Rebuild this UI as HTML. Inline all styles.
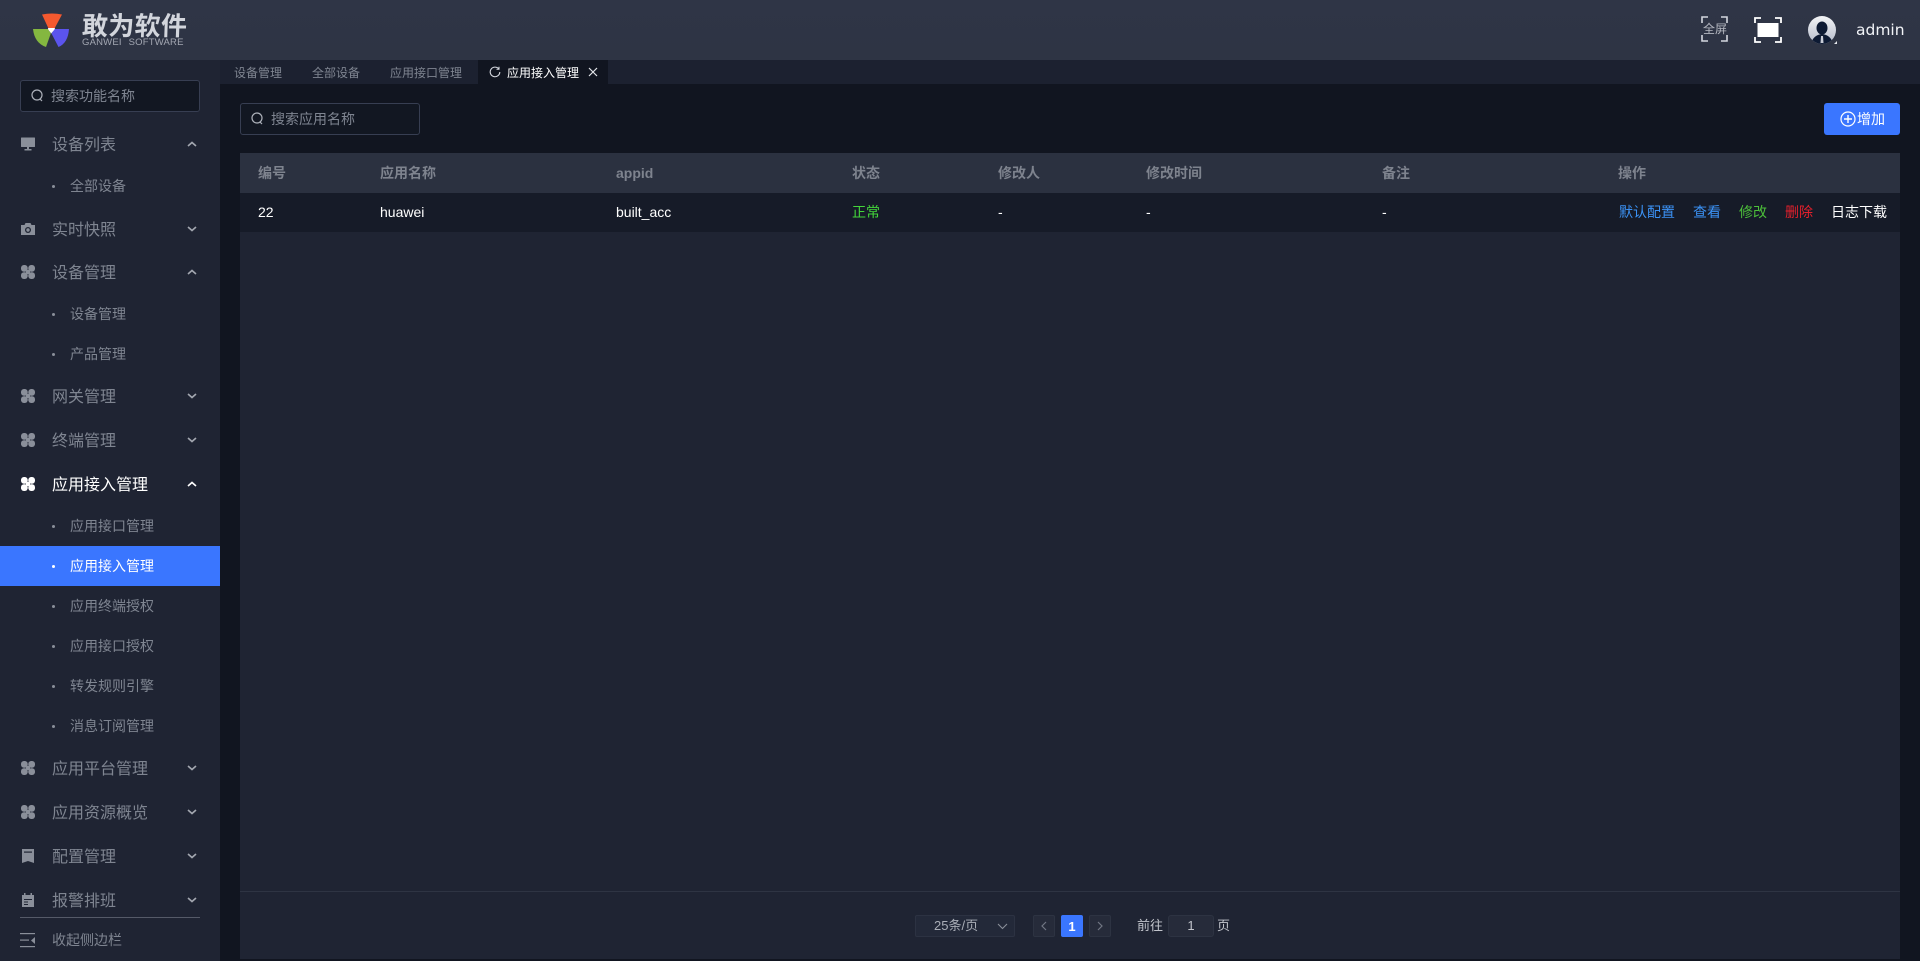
<!DOCTYPE html>
<html lang="zh-CN"><head><meta charset="utf-8"><title>敢为软件</title>
<style>
*{box-sizing:border-box}
html,body{margin:0;padding:0;width:1920px;height:961px;overflow:hidden;background:#111520;font-family:"Liberation Sans","Noto Sans CJK SC",sans-serif}
.a{position:absolute;white-space:nowrap;line-height:20px;height:20px}
.m{left:52px;font-size:16px;color:#7f8591;margin-top:2px}
.s{left:70px;font-size:14px;color:#7f8591}
.d{position:absolute;left:52px;width:3px;height:3px;border-radius:50%;background:#8a8f9a}
.t{font-size:12px;color:#7f8591;top:63px}
.h{font-size:14px;font-weight:bold;color:#7e838e;top:163px}
.c{font-size:14px;color:#fff;top:202px}
svg{position:absolute;display:block}
.ic{left:21px;width:14px;height:14px}
.ar{left:186px;width:12px;height:8px}
</style></head><body>
<svg width="0" height="0" style="position:absolute"><defs>
<g id="clover" fill="currentColor"><rect x="0" y="0" width="6.700" height="6.700" rx="2.900"/><rect x="7.300" y="0" width="6.700" height="6.700" rx="2.900"/><rect x="0" y="7.300" width="6.700" height="6.700" rx="2.900"/><rect x="7.300" y="7.300" width="6.700" height="6.700" rx="2.900"/><rect x="5" y="5" width="4" height="4"/></g>
<path id="up" d="M2 6 L6 2.500 L10 6" fill="none" stroke="currentColor" stroke-width="1.600"/>
<path id="down" d="M2 2 L6 5.500 L10 2" fill="none" stroke="currentColor" stroke-width="1.600"/>
</defs></svg>

<!-- header -->
<div style="position:absolute;left:0;top:0;width:1920px;height:60px;background:linear-gradient(#2f3546,#2e3444)"></div>
<svg style="left:33px;top:13px" width="36" height="35" viewBox="0 0 36 35">
<path d="M9 1.500 Q19 -.5 29 1.500 L21.500 15.500 L15.500 15.500Z" fill="#f4592f"/>
<path d="M0 16 L15 16 L17.800 20.500 L13 34 Q1.500 30 0 16Z" fill="#84b740"/>
<path d="M21.500 16 L36 16 Q35 30 25.500 34 L18.500 20.500Z" fill="#5b54ee"/>
<path d="M15 15 L22 15 L21.500 16.500 L18.200 20.500 L15.200 16.500Z" fill="#fff"/>
</svg>
<div class="a" style="left:82px;top:13px;font-size:26px;line-height:26px;height:26px;font-weight:bold;color:#d2d5dc;letter-spacing:.3px;transform:skewX(-2deg)">敢为软件</div>
<div class="a" style="left:82px;top:37px;font-size:9.500px;line-height:12px;height:12px;color:#a3a7b2;letter-spacing:.2px;word-spacing:4px">GANWEI SOFTWARE</div>

<svg style="left:1701px;top:16px" width="27" height="26" fill="none" stroke="#d3d6de" stroke-width="1.600"><path d="M1 7V1H7M20 1H26V7M1 19V25H7M20 25H26V19"/></svg>
<div class="a" style="left:1703px;top:19px;font-size:12px;color:#b4b7c0">全屏</div>
<svg style="left:1754px;top:17px" width="28" height="26" fill="none"><path d="M1 6V1H7M21 1H27V6M1 20V25H7M21 25H27V20" stroke="#fff" stroke-width="1.800"/><rect x="3.500" y="6" width="21" height="14" fill="#fff"/></svg>
<svg style="left:1808px;top:16px" width="30" height="29" viewBox="0 0 30 29"><defs><linearGradient id="av" x1="0" y1="0" x2="0" y2="1"><stop offset="0" stop-color="#f3f4f6"/><stop offset="1" stop-color="#b4bbcb"/></linearGradient><clipPath id="cp"><circle cx="14" cy="14" r="14"/></clipPath></defs><circle cx="14" cy="14" r="14" fill="url(#av)"/><g clip-path="url(#cp)"><ellipse cx="14" cy="12" rx="5.500" ry="6.500" fill="#0d1a33"/><path d="M3 28 Q5 19 14 18 Q23 19 25 28Z" fill="#0d1a33"/><path d="M13 20h2l.5 7h-3z" fill="#c8ccd6"/></g><path d="M26 28h3v-3z" fill="#e5e7ec"/></svg>
<div class="a" style="left:1856px;top:20px;font-family:'DejaVu Sans',sans-serif;font-size:15.500px;color:#f2f4f8">admin</div>

<!-- sidebar -->
<div style="position:absolute;left:0;top:60px;width:220px;height:901px;background:#1f2433"></div>
<div style="position:absolute;left:20px;top:80px;width:180px;height:32px;background:#121722;border:1px solid #373e52;border-radius:3px"></div>
<svg style="left:31px;top:89px" width="13" height="14" fill="none" stroke="#aeb2bb" stroke-width="1.200"><circle cx="6" cy="6" r="5"/><path d="M9 10l2 2"/></svg>
<div class="a" style="left:51px;top:86px;font-size:14px;color:#7f8591">搜索功能名称</div>

<svg class="ic" style="top:137px;color:#8a8f9a" viewBox="0 0 14 14" fill="#8a8f9a"><rect x="0" y="0.500" width="14" height="9.500" rx=".5"/><rect x="6" y="10" width="2" height="2"/><rect x="3.500" y="12" width="7" height="1.500"/></svg>
<div class="a m" style="top:134px">设备列表</div>
<svg class="ar" style="top:140px;color:#a3a7b0" viewBox="0 0 12 8"><use href="#up"/></svg>
<div class="d" style="top:185px"></div><div class="a s" style="top:176px">全部设备</div>

<svg class="ic" style="top:222px" viewBox="0 0 14 14"><path d="M0 3h3.500l1-2h5l1 2H14v10H0z" fill="#8a8f9a"/><circle cx="7" cy="8" r="3" fill="#1f2433"/><circle cx="7" cy="8" r="1.700" fill="#8a8f9a"/></svg>
<div class="a m" style="top:219px">实时快照</div>
<svg class="ar" style="top:225px;color:#a3a7b0" viewBox="0 0 12 8"><use href="#down"/></svg>

<svg class="ic" style="top:265px;color:#8a8f9a" viewBox="0 0 14 14"><use href="#clover"/></svg>
<div class="a m" style="top:262px">设备管理</div>
<svg class="ar" style="top:268px;color:#a3a7b0" viewBox="0 0 12 8"><use href="#up"/></svg>
<div class="d" style="top:313px"></div><div class="a s" style="top:304px">设备管理</div>
<div class="d" style="top:353px"></div><div class="a s" style="top:344px">产品管理</div>

<svg class="ic" style="top:389px;color:#8a8f9a" viewBox="0 0 14 14"><use href="#clover"/></svg>
<div class="a m" style="top:386px">网关管理</div>
<svg class="ar" style="top:392px;color:#a3a7b0" viewBox="0 0 12 8"><use href="#down"/></svg>

<svg class="ic" style="top:433px;color:#8a8f9a" viewBox="0 0 14 14"><use href="#clover"/></svg>
<div class="a m" style="top:430px">终端管理</div>
<svg class="ar" style="top:436px;color:#a3a7b0" viewBox="0 0 12 8"><use href="#down"/></svg>

<svg class="ic" style="top:477px;color:#fff" viewBox="0 0 14 14"><use href="#clover"/></svg>
<div class="a m" style="top:474px;color:#fff">应用接入管理</div>
<svg class="ar" style="top:480px;color:#fff" viewBox="0 0 12 8"><use href="#up"/></svg>
<div class="d" style="top:525px"></div><div class="a s" style="top:516px">应用接口管理</div>
<div style="position:absolute;left:0;top:546px;width:220px;height:40px;background:#3a76ff"></div>
<div class="d" style="top:565px;background:#fff"></div><div class="a s" style="top:556px;color:#fff">应用接入管理</div>
<div class="d" style="top:605px"></div><div class="a s" style="top:596px">应用终端授权</div>
<div class="d" style="top:645px"></div><div class="a s" style="top:636px">应用接口授权</div>
<div class="d" style="top:685px"></div><div class="a s" style="top:676px">转发规则引擎</div>
<div class="d" style="top:725px"></div><div class="a s" style="top:716px">消息订阅管理</div>

<svg class="ic" style="top:761px;color:#8a8f9a" viewBox="0 0 14 14"><use href="#clover"/></svg>
<div class="a m" style="top:758px">应用平台管理</div>
<svg class="ar" style="top:764px;color:#a3a7b0" viewBox="0 0 12 8"><use href="#down"/></svg>

<svg class="ic" style="top:805px;color:#8a8f9a" viewBox="0 0 14 14"><use href="#clover"/></svg>
<div class="a m" style="top:802px">应用资源概览</div>
<svg class="ar" style="top:808px;color:#a3a7b0" viewBox="0 0 12 8"><use href="#down"/></svg>

<svg class="ic" style="top:849px" viewBox="0 0 14 14"><path d="M1 0h12v14l-6-2-6 2z" fill="#8a8f9a"/><rect x="3" y="2.500" width="8" height="1.200" fill="#1f2433"/></svg>
<div class="a m" style="top:846px">配置管理</div>
<svg class="ar" style="top:852px;color:#a3a7b0" viewBox="0 0 12 8"><use href="#down"/></svg>

<svg class="ic" style="top:893px" viewBox="0 0 14 14"><path d="M1 2h2V0h1.500v2h5V0H11v2h2v12H1z" fill="#8a8f9a"/><rect x="3" y="6" width="8" height="1" fill="#1f2433"/><rect x="3" y="8.500" width="4" height="1" fill="#1f2433"/><rect x="3" y="11" width="4" height="1" fill="#1f2433"/></svg>
<div class="a m" style="top:890px">报警排班</div>
<svg class="ar" style="top:896px;color:#a3a7b0" viewBox="0 0 12 8"><use href="#down"/></svg>

<div style="position:absolute;left:20px;top:917px;width:180px;height:1px;background:#555a68"></div>
<svg style="left:20px;top:933px" width="16" height="15" fill="#8a8f9a"><rect x="0" y="0" width="15" height="1.200"/><rect x="0" y="6.500" width="9" height="1.200"/><rect x="0" y="13" width="15" height="1.200"/><path d="M15 4v7l-4-3.500z"/></svg>
<div class="a s" style="left:52px;top:930px">收起侧边栏</div>

<!-- tabs -->
<div style="position:absolute;left:220px;top:60px;width:1700px;height:24px;background:#1c2130"></div>
<div class="a t" style="left:234px">设备管理</div>
<div class="a t" style="left:312px">全部设备</div>
<div class="a t" style="left:390px">应用接口管理</div>
<div style="position:absolute;left:478px;top:60px;width:130px;height:24px;background:#111520"></div>
<svg style="left:489px;top:66px" width="12" height="12" fill="none" stroke="#d8dbe2" stroke-width="1.100"><path d="M9.800 3A4.800 4.800 0 1 0 10.800 6"/><path d="M10 .8V3.300H7.500" stroke-width="1"/></svg>
<div class="a t" style="left:507px;color:#fff">应用接入管理</div>
<svg style="left:588px;top:67px" width="10" height="10" stroke="#e4e6ea" stroke-width="1.200"><path d="M1 1l8 8M9 1l-8 8"/></svg>

<!-- toolbar -->
<div style="position:absolute;left:240px;top:103px;width:180px;height:32px;background:#121722;border:1px solid #373e52;border-radius:3px"></div>
<svg style="left:251px;top:112px" width="13" height="14" fill="none" stroke="#aeb2bb" stroke-width="1.200"><circle cx="6" cy="6" r="5"/><path d="M9 10l2 2"/></svg>
<div class="a" style="left:271px;top:109px;font-size:14px;color:#7f8591">搜索应用名称</div>
<div style="position:absolute;left:1824px;top:103px;width:76px;height:32px;background:#3a76ff;border-radius:3px"></div>
<svg style="left:1840px;top:111px" width="16" height="16" fill="none" stroke="#fff" stroke-width="1.200"><circle cx="8" cy="8" r="7"/><path d="M8 4v8M4 8h8" stroke-width="1.400"/></svg>
<div class="a" style="left:1857px;top:109px;font-size:14px;color:#fff">增加</div>

<!-- table -->
<div style="position:absolute;left:240px;top:153px;width:1660px;height:806px;background:#1f2433"></div>
<div style="position:absolute;left:240px;top:153px;width:1660px;height:40px;background:#2b3140"></div>
<div style="position:absolute;left:240px;top:193px;width:1660px;height:39px;background:#161b28"></div>
<div class="a h" style="left:258px">编号</div>
<div class="a h" style="left:380px">应用名称</div>
<div class="a h" style="left:616px">appid</div>
<div class="a h" style="left:852px">状态</div>
<div class="a h" style="left:998px">修改人</div>
<div class="a h" style="left:1146px">修改时间</div>
<div class="a h" style="left:1382px">备注</div>
<div class="a h" style="left:1618px">操作</div>
<div class="a c" style="left:258px">22</div>
<div class="a c" style="left:380px">huawei</div>
<div class="a c" style="left:616px">built_acc</div>
<div class="a c" style="left:852px;color:#43d63a">正常</div>
<div class="a c" style="left:998px">-</div>
<div class="a c" style="left:1146px">-</div>
<div class="a c" style="left:1382px">-</div>
<div class="a c" style="left:1619px;color:#3b92f5">默认配置</div>
<div class="a c" style="left:1693px;color:#3b92f5">查看</div>
<div class="a c" style="left:1739px;color:#4cbf3a">修改</div>
<div class="a c" style="left:1785px;color:#e3202c">删除</div>
<div class="a c" style="left:1831px">日志下载</div>

<!-- pagination -->
<div style="position:absolute;left:240px;top:891px;width:1660px;height:1px;background:#2e3443"></div>
<div style="position:absolute;left:915px;top:915px;width:100px;height:22px;background:#232939;border:1px solid #2c3242;border-radius:2px"></div>
<div class="a" style="left:934px;top:916px;font-size:13px;color:#a9adb6">25条/页</div>
<svg style="left:997px;top:923px" width="11" height="7" fill="none" stroke="#8a8f9a" stroke-width="1.100"><path d="M1 1l4.500 4.500L10 1"/></svg>
<div style="position:absolute;left:1033px;top:915px;width:22px;height:22px;background:#262b3a;border:1px solid #2d3342;border-radius:2px"></div>
<svg style="left:1040px;top:921px" width="8" height="10" fill="none" stroke="#717684" stroke-width="1.200"><path d="M6 1L2 5l4 4"/></svg>
<div style="position:absolute;left:1061px;top:915px;width:22px;height:22px;background:#3a76ff;border-radius:2px;color:#fff;font-size:13px;font-weight:bold;text-align:center;line-height:24px">1</div>
<div style="position:absolute;left:1089px;top:915px;width:22px;height:22px;background:#262b3a;border:1px solid #2d3342;border-radius:2px"></div>
<svg style="left:1096px;top:921px" width="8" height="10" fill="none" stroke="#717684" stroke-width="1.200"><path d="M2 1l4 4-4 4"/></svg>
<div class="a" style="left:1137px;top:916px;font-size:13px;color:#c2c5cc">前往</div>
<div style="position:absolute;left:1168px;top:915px;width:46px;height:22px;background:#262b3a;border:1px solid #2d3342;border-radius:3px;color:#c2c5cc;font-size:13px;text-align:center;line-height:20px">1</div>
<div class="a" style="left:1217px;top:916px;font-size:13px;color:#c2c5cc">页</div>
</body></html>
